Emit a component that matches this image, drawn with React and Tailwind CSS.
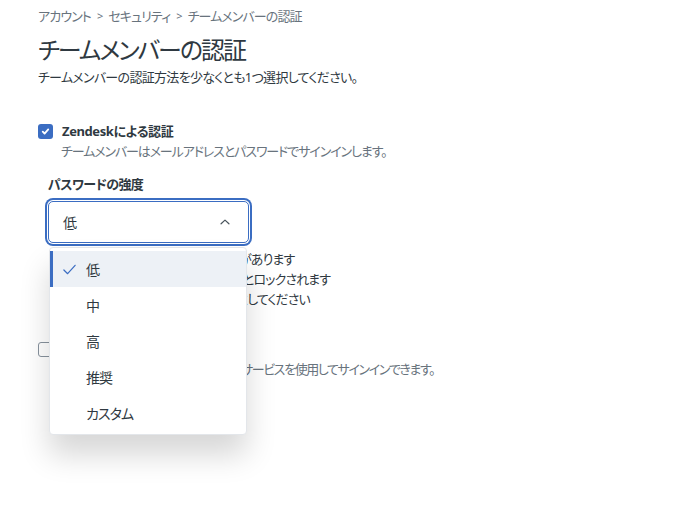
import React, { useState } from "react";

const levels = ["低", "中", "高", "推奨", "カスタム"];

const rules = [
  "・パスワードは10文字以上である必要があります",
  "・サインインに5回以上連続で失敗するとロックされます",
  "・前のパスワードとは異なる別のものにしてください",
];

const CheckIcon = ({ className }) => (
  <svg viewBox="0 0 12 12" className={className} fill="none">
    <path d="M3 6.2 5 8.2 9 3.8" stroke="currentColor" strokeWidth="2" strokeLinecap="round" strokeLinejoin="round" />
  </svg>
);

const App = () => {
  const [level, setLevel] = useState("低");
  const [zendesk, setZendesk] = useState(true);
  const [external, setExternal] = useState(false);

  return (
    <div className="min-h-screen bg-white pl-[38px] pt-[6px] text-[#2f3941] tracking-[-0.9px] [font-family:'Noto_Sans','Noto_Sans_CJK_JP',sans-serif] [font-feature-settings:'palt']">
      <nav className="flex items-center gap-[6px] text-[13px] leading-[20px] text-[#68737d]">
        <span>アカウント</span>
        <span className="text-[11px]">&gt;</span>
        <span>セキュリティ</span>
        <span className="text-[11px]">&gt;</span>
        <span>チームメンバーの認証</span>
      </nav>

      <h1 className="mt-[8px] text-[24px] leading-[32px] tracking-[-2px] text-[#2f3941]">チームメンバーの認証</h1>
      <p className="mt-[1px] text-[13px] leading-[20px] tracking-[-0.7px]">チームメンバーの認証方法を少なくとも1つ選択してください。</p>

      <div className="mt-[34px]">
        <label className="flex items-center gap-[9px]">
          <button
            onClick={() => setZendesk(!zendesk)}
            className={`flex h-[15px] w-[15px] items-center justify-center rounded-[3px] ${zendesk ? "bg-[#3b6dc2] text-white" : "border border-[#87929d] bg-white"}`}
          >
            {zendesk && <CheckIcon className="h-[11px] w-[11px]" />}
          </button>
          <span className="text-[13px] font-bold leading-[20px] tracking-[-0.4px]">Zendeskによる認証</span>
        </label>
        <p className="ml-[23px] text-[13px] leading-[20px] tracking-[-1.1px] text-[#68737d]">チームメンバーはメールアドレスとパスワードでサインインします。</p>

        <div className="ml-[10px] mt-[13px]">
          <div className="text-[13px] font-bold leading-[20px] tracking-[-0.6px]">パスワードの強度</div>
          <div className="relative mt-[7px] w-[201px]">
            <button className="flex h-[42px] w-full items-center justify-between rounded-[5px] border border-[#3b6dc2] bg-white pl-[14px] pr-[16px] text-[14px] shadow-[0_0_0_1px_#fff,0_0_0_3px_#3b6dc2]">
              <span>{level}</span>
              <svg viewBox="0 0 16 16" className="h-[14px] w-[14px] text-[#49545c]" fill="none">
                <path d="M3.5 10 8 5.8 12.5 10" stroke="currentColor" strokeWidth="1.4" strokeLinecap="round" strokeLinejoin="round" />
              </svg>
            </button>

            <ul className="absolute left-[1px] top-[46px] z-10 w-[198px] rounded-[4px] border border-[#e3e6ea] bg-white py-[3px] shadow-[0_20px_30px_rgba(0,0,0,0.16)]">
              {levels.map((l) => (
                <li
                  key={l}
                  onClick={() => setLevel(l)}
                  className={`relative flex h-[36px] cursor-pointer items-center pl-[36px] text-[14px] ${l === level ? "bg-[#edf1f6]" : ""}`}
                >
                  {l === level && (
                    <>
                      <span className="absolute bottom-0 left-0 top-0 w-[3px] bg-[#3b6dc2]" />
                      <svg viewBox="0 0 16 16" className="absolute left-[12px] h-[15px] w-[15px] text-[#3b6dc2]" fill="none">
                        <path d="M2 8.5 6 12.5 14 3.5" stroke="currentColor" strokeWidth="1.3" strokeLinecap="round" strokeLinejoin="round" />
                      </svg>
                    </>
                  )}
                  {l}
                </li>
              ))}
            </ul>
          </div>

          <ul className="mt-[6px] text-[13px] leading-[20px]">
            {rules.map((r) => (
              <li key={r}>{r}</li>
            ))}
          </ul>
        </div>

        <div className="mt-[30px]">
          <label className="flex items-center gap-[9px]">
            <button
              onClick={() => setExternal(!external)}
              className={`flex h-[15px] w-[15px] items-center justify-center rounded-[3px] ${external ? "bg-[#3b6dc2] text-white" : "border border-[#87929d] bg-white"}`}
            >
              {external && <CheckIcon className="h-[11px] w-[11px]" />}
            </button>
            <span className="text-[13px] font-bold leading-[20px] tracking-[-0.4px]">外部認証</span>
          </label>
          <p className="ml-[23px] text-[13px] leading-[20px] tracking-[-1.4px] text-[#68737d]">チームメンバーはシングルサインオンサービスを使用してサインインできます。</p>
        </div>
      </div>
    </div>
  );
};

export default App;
